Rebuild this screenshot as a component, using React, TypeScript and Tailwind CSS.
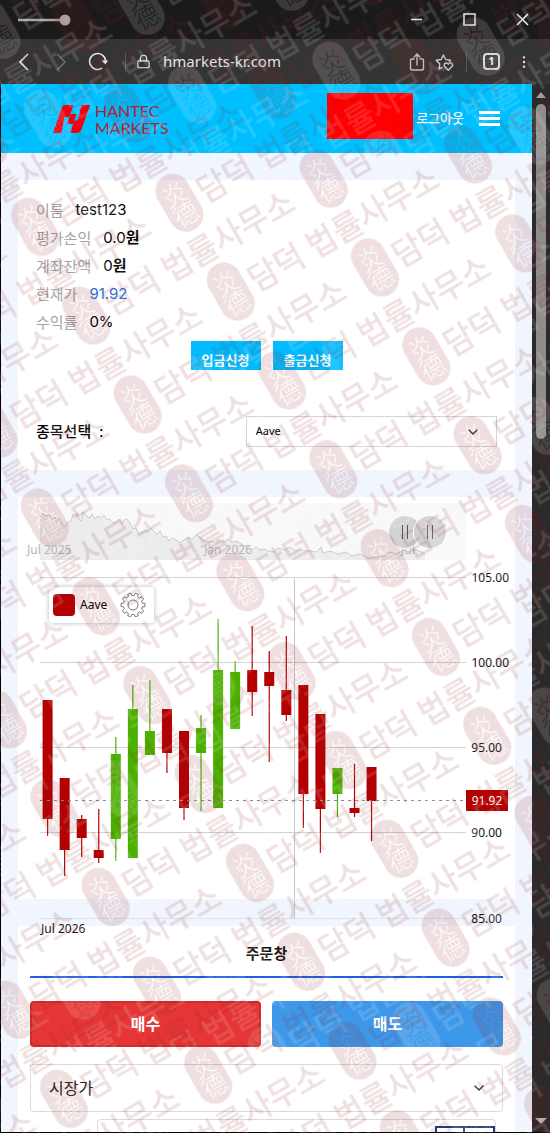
import { ChevronDown, Lock, MoreVertical } from "lucide-react";

type Candle = {
  high: number;
  top: number;
  bottom: number;
  low: number;
  up?: boolean;
};

// y values in chart space, one entry per day
const candles: Candle[] = [
  { high: 203, top: 203, bottom: 322, low: 339 },
  { high: 281, top: 281, bottom: 353, low: 379 },
  { high: 318, top: 322, bottom: 341, low: 360 },
  { high: 312, top: 353, bottom: 361, low: 366 },
  { high: 240, top: 257, bottom: 342, low: 364, up: true },
  { high: 188, top: 212, bottom: 361, low: 361, up: true },
  { high: 183, top: 234, bottom: 258, low: 258, up: true },
  { high: 212, top: 212, bottom: 256, low: 276 },
  { high: 234, top: 234, bottom: 311, low: 323 },
  { high: 218, top: 231, bottom: 256, low: 314, up: true },
  { high: 122, top: 173, bottom: 311, low: 311, up: true },
  { high: 164, top: 175, bottom: 232, low: 232, up: true },
  { high: 129, top: 173, bottom: 195, low: 219 },
  { high: 154, top: 175, bottom: 189, low: 265 },
  { high: 139, top: 193, bottom: 218, low: 224 },
  { high: 188, top: 188, bottom: 297, low: 331 },
  { high: 217, top: 217, bottom: 312, low: 356 },
  { high: 271, top: 271, bottom: 297, low: 320, up: true },
  { high: 267, top: 311, bottom: 316, low: 320 },
  { high: 270, top: 270, bottom: 304, low: 344 },
];

const gridLines = [
  { y: 81, label: "105.00" },
  { y: 166, label: "100.00" },
  { y: 251, label: "95.00" },
  { y: 336, label: "90.00" },
  { y: 422, label: "85.00" },
];

const account = [
  { label: "이름", value: "test123" },
  { label: "평가손익", value: "0.0", unit: "원" },
  { label: "계좌잔액", value: "0", unit: "원" },
  { label: "현재가", value: "91.92", accent: true },
  { label: "수익률", value: "0%" },
];

const historyLine =
  "22,20 25,16 28,19 31,17 34,22 37,20 39,24 41,21 44,27 46,30 48,28 51,24 53,25 55,17 57,20 59,16 61,22 63,24 65,15 68,18 71,21 74,17 77,22 80,19 83,21 86,18 89,23 92,22 95,26 98,25 101,22 104,27 106,23 109,22 112,26 115,32 118,31 121,37 124,35 127,33 130,35 133,31 136,34 139,38 142,34 145,40 148,39 151,44 155,41 158,43 162,46 166,43 170,40 174,42 178,38 182,40 186,44 190,45 194,44 198,46 202,43 206,45 210,42 214,45 218,44 222,46 226,49 230,48 234,53 238,50 242,53 246,52 250,54 255,55 260,51 266,53 272,50 278,54 285,53 292,54 299,55 303,50 305,56 312,54 320,57 328,55 334,59 342,57 350,61 358,60 366,59 372,55 378,57 386,53 391,55 396,52 401,54 407,57";

function BrowserBar() {
  return (
    <div className="shrink-0 text-gray-200">
      <div className="flex h-[39px] items-center justify-between bg-[#1b1a1a] pl-[18px] pr-[21px]">
        <svg width="54" height="12" viewBox="0 0 54 12">
          <path d="M0 6h46" stroke="#a9a4a4" strokeWidth="2.5" />
          <circle cx="47" cy="6" r="5.5" fill="#b5aeae" />
        </svg>
        <div className="flex items-center gap-[40px]">
          <button aria-label="Minimize">
            <svg width="13" height="13" viewBox="0 0 13 13" stroke="#e5e5e5" strokeWidth="1.500">
              <path d="M1 6.500h11" />
            </svg>
          </button>
          <button aria-label="Maximize">
            <svg width="13" height="13" viewBox="0 0 13 13" fill="none" stroke="#e5e5e5" strokeWidth="1.500">
              <rect x="1" y="1" width="11" height="11" />
            </svg>
          </button>
          <button aria-label="Close">
            <svg width="13" height="13" viewBox="0 0 13 13" stroke="#f0f0f0" strokeWidth="1.600">
              <path d="m1 1 11 11M12 1 1 12" />
            </svg>
          </button>
        </div>
      </div>
      <div className="flex h-[45px] items-center bg-[#353434] pl-4 pr-[18px]">
        <button aria-label="Back">
          <svg width="16" height="20" viewBox="0 0 16 20" fill="none">
            <path d="M12 2 4 10l8 8" stroke="#e5e5e5" strokeWidth="1.6" />
          </svg>
        </button>
        <button aria-label="Forward" className="ml-[21px]">
          <svg width="16" height="20" viewBox="0 0 16 20" fill="none">
            <path d="m4 2 8 8-8 8" stroke="#6d6a6a" strokeWidth="1.6" />
          </svg>
        </button>
        <button aria-label="Reload" className="ml-[18px]">
          <svg width="22" height="20" viewBox="0 0 22 20" fill="none">
            <path d="M15 16.2A8 8 0 1 1 18.6 9" stroke="#e5e5e5" strokeWidth="1.6" />
            <path d="M14.5 8.5h6.5l-2.5 4z" fill="#e5e5e5" />
          </svg>
        </button>
        <span className="ml-4 h-5 w-px bg-[#595656]" />
        <Lock size={15} strokeWidth={1.8} className="ml-[10px]" />
        <span className="ml-3 flex-1 text-[15px]">hmarkets-kr.com</span>
        <button aria-label="Share">
          <svg width="16" height="20" viewBox="0 0 16 20" fill="none" stroke="#cfcccc" strokeWidth="1.4">
            <path d="M5.5 7H2.7Q1.5 7 1.5 8.2v8Q1.5 18 3.3 18h9.4q1.8 0 1.8-1.8v-8Q14.500 7 13.300 7H10.500M8 13.500V2.500M4.700 5.500 8 2l3.300 3.500" />
          </svg>
        </button>
        <button aria-label="Favorites" className="ml-[10px]">
          <svg width="19" height="20" viewBox="0 0 19 20" fill="none" stroke="#cfcccc" strokeWidth="1.4" strokeLinejoin="round">
            <path d="M7.500 15.200 4 17l.8-5L1.200 8.300l4.900-.8L8.400 3l2.300 4.500 4.800.8-1.500 1.600" />
            <path d="M13.300 18.200 9.700 14.600a2.100 2.100 0 0 1 3-3l.6.600.6-.6a2.100 2.100 0 0 1 3 3z" />
          </svg>
        </button>
        <span className="ml-3 h-5 w-px bg-[#595656]" />
        <button
          aria-label="Tabs"
          className="ml-4 flex size-[17px] items-center justify-center rounded border-2 border-gray-300 text-[11px] font-bold"
        >
          1
        </button>
        <button aria-label="More" className="ml-4">
          <MoreVertical size={16} strokeWidth={1.6} />
        </button>
      </div>
    </div>
  );
}

function Logo() {
  return (
    <a href="#" className="flex items-center gap-1">
      <svg width="38" height="30" viewBox="0 0 38 30" fill="#f2000d">
        <path d="M11 1h9.500l-4.200 12h-4.800L8.500 29H0L7.800 6.500Q9 2 11 1z" />
        <path d="M28.500 1H37l-8 23q-1.500 5-6 5h-6l4.300-12.500h3.500z" />
        <path d="M17.500 10h6l-3.500 10h-6z" />
      </svg>
      <span className="flex flex-col font-['Lato',sans-serif] text-base leading-[17px] text-[#b32238]">
        <span>HANTEC</span>
        <span>MARKETS</span>
      </span>
    </a>
  );
}

function SiteHeader() {
  return (
    <header className="flex h-[69px] shrink-0 items-center justify-between bg-[#00bfff] pl-[52px] pr-8">
      <Logo />
      <div className="flex items-center">
        <div className="mb-[5px] h-[46px] w-[86px] bg-[#ff0000]" />
        <a href="#" className="ml-[3px] text-[13px] font-medium text-white">
          로그아웃
        </a>
        <button aria-label="Menu" className="ml-[15px] flex w-[21px] flex-col gap-[3px]">
          <span className="h-[3px] bg-white" />
          <span className="h-[3px] bg-white" />
          <span className="h-[3px] bg-white" />
        </button>
      </div>
    </header>
  );
}

function AccountCard() {
  return (
    <section className="bg-white px-[18px] pb-[23px] pt-4">
      <dl>
        {account.map((row) => (
          <div key={row.label} className="flex h-7 items-center gap-3 text-[15px]">
            <dt className="text-[#a3a3a3]">{row.label}</dt>
            <dd
              className={`font-['Inter','Noto_Sans_CJK_KR',sans-serif] ${
                row.accent ? "text-[#2b72d9]" : "text-black"
              }`}
            >
              {row.value}
              {row.unit && <b>{row.unit}</b>}
            </dd>
          </div>
        ))}
      </dl>
      <div className="mt-[5px] flex justify-center gap-3">
        <button className="h-[29px] w-[70px] bg-[#00bbff] pt-2 text-[13px] leading-5 font-bold text-white">입금신청</button>
        <button className="h-[29px] w-[70px] bg-[#00bbff] pt-2 text-[13px] leading-5 font-bold text-white">출금신청</button>
      </div>
      <div className="mt-[46px] flex items-center justify-between">
        <label htmlFor="symbol" className="flex gap-2 text-[15px] font-medium text-black">
          <span>종목선택</span>
          <span>:</span>
        </label>
        <div className="relative w-[54.5%]">
          <select
            id="symbol"
            className="h-[31px] w-full appearance-none border border-[#d4d4d4] bg-white px-[9px] text-[11px] text-black"
          >
            <option>Aave</option>
          </select>
          <ChevronDown size={16} className="pointer-events-none absolute right-4 top-2 text-[#333]" />
        </div>
      </div>
    </section>
  );
}

function Grip({ label }: { label: string }) {
  return (
    <button
      aria-label={label}
      className="-mr-[9px] flex size-[34px] items-center justify-center gap-1 rounded-full border border-white bg-[#cdcdcd]/85"
    >
      <span className="h-[14px] w-px bg-[#555]" />
      <span className="h-[14px] w-px bg-[#555]" />
    </button>
  );
}

function GearIcon() {
  const teeth = Array.from({ length: 10 }, (_, i) => {
    const at = (deg: number, r: number) => {
      const a = ((i * 36 + deg) * Math.PI) / 180;
      return `${(13 + r * Math.cos(a)).toFixed(2)} ${(13 + r * Math.sin(a)).toFixed(2)}`;
    };
    return `${i ? "L" : "M"}${at(-11, 9.5)}L${at(-8, 12)}L${at(8, 12)}L${at(11, 9.5)}`;
  });
  return (
    <svg width="26" height="26" viewBox="0 0 26 26" fill="none" stroke="#777" strokeLinejoin="round">
      <path d={`${teeth.join("")}Z`} />
      <circle cx="13" cy="13" r="5" />
    </svg>
  );
}

function ChartCard() {
  return (
    <section className="relative z-10 h-[402px] bg-white">
      <svg viewBox="0 0 497 440" className="w-full overflow-visible text-xs">
        {/* range scroller */}
        <rect x="22" y="6" width="426" height="57" fill="#f8f8f8" />
        <polygon points={`22,63 ${historyLine} 407,63`} fill="#ececec" />
        <polyline points={historyLine} fill="none" stroke="#c9c9c9" />
        <g fill="#b5b5b5">
          <text x="9" y="57">Jul 2025</text>
          <text x="186" y="57">Jan 2026</text>
          <text x="383" y="57">Jul</text>
        </g>

        {gridLines.map((line) => (
          <g key={line.label}>
            <path d={`M22 ${line.y - 0.5}H448`} stroke={line.y === 422 ? "#dbe2ea" : "#d2d0d0"} />
            <text x={line.label.length === 5 ? 484 : 491} y={line.y + 4} textAnchor="end" fill="#111">
              {line.label}
            </text>
          </g>
        ))}
        <path d="M276.500 81V422" stroke="#c6c6c6" />

        {candles.map((c, i) => {
          const x = 29.6 + i * 17.05;
          const color = c.up ? "#4bb000" : "#b40000";
          return (
            <g key={i} fill={color}>
              <path d={`M${x} ${c.high}V${c.low}`} stroke={color} strokeWidth="1.200" />
              <rect x={x - 5} y={c.top} width="10" height={c.bottom - c.top} />
            </g>
          );
        })}

        <path d="M22 303.500H448" stroke="#8a8a8a" strokeDasharray="3 4" />
        <rect x="448" y="293" width="42" height="21" fill="#b40000" />
        <text x="469" y="308" textAnchor="middle" fill="#fff">91.92</text>
        <text x="23" y="436" fill="#111">Jul 2026</text>
      </svg>

      <div className="absolute left-[74.5%] top-[18px] flex">
        <Grip label="Range start" />
        <Grip label="Range end" />
      </div>

      <div className="absolute left-[31px] top-[90px] flex h-[36px] items-center rounded bg-white/90 pl-1 pr-2 shadow-[0_0_5px_rgba(0,0,0,0.3)]">
        <span className="size-[22px] rounded bg-[#b40000]" />
        <span className="ml-[5px] text-xs text-black">Aave</span>
        <button aria-label="Series settings" className="ml-[13px]">
          <GearIcon />
        </button>
      </div>
    </section>
  );
}

function OrderCard() {
  return (
    <section className="bg-white px-3">
      <h2 className="border-b-2 border-[#1d5fe0] pb-[11px] pt-[15px] text-center text-[15px] leading-6 font-bold text-[#111]">
        주문창
      </h2>
      <div className="mt-[23px] grid grid-cols-2 gap-[11px]">
        <button className="h-[46px] rounded border-2 border-[#cf2b2b] bg-[#e53535] text-base font-bold text-white">
          매수
        </button>
        <button className="h-[46px] rounded bg-[#3d98ea] text-base font-bold text-white">매도</button>
      </div>
      <div className="relative mt-[17px]">
        <select
          aria-label="시장가"
          className="h-12 w-full appearance-none rounded border border-[#d9d9d9] bg-white px-[18px] text-base text-[#222]"
        >
          <option>시장가</option>
        </select>
        <ChevronDown size={16} className="pointer-events-none absolute right-4 top-4 text-[#333]" />
      </div>
      <div className="ml-[67px] mr-[7px] mt-[7px] flex h-12 items-start justify-end rounded border border-[#d9d9d9] pt-[6px]">
        <button aria-label="Decrease" className="h-9 w-[30px] border-2 border-[#22387f]" />
        <button aria-label="Increase" className="h-9 w-[30px] border-2 border-l-0 border-[#22387f]" />
      </div>
    </section>
  );
}

function Scrollbar() {
  return (
    <div className="flex w-[18px] shrink-0 flex-col items-center justify-between bg-[#2b2929] pb-2 pt-2">
      <svg width="10" height="6" viewBox="0 0 10 6" fill="#a29d9d">
        <path d="M5 0l5 6H0z" />
      </svg>
      <div className="mt-[6px] w-full flex-1 px-1">
        <div className="mx-auto h-[33%] w-[10px] rounded-full bg-[#8f8c8c]" />
      </div>
      <svg width="12" height="6" viewBox="0 0 12 6" fill="#c0baba">
        <path d="M0 0h12L6 6z" />
      </svg>
    </div>
  );
}

// Brick layout: each stamp repeats half a tile over on the next row
const stampOffsets = [
  [0, 0],
  [137, 51.3],
  [137, -51.3],
  [-137, 51.3],
];

function StampPattern({ id, x, y, color }: { id: string; x: number; y: number; color: string }) {
  return (
    <>
      <mask id={`${id}-seal`} maskUnits="userSpaceOnUse" x="-20" y="-34" width="40" height="68">
        <rect x="-17.500" y="-31" width="35" height="62" rx="17.500" fill="#fff" />
        <g fill="#000" fontSize="25" textAnchor="middle" className="font-['Noto_Sans_CJK_TC',sans-serif] font-light">
          <text y="-1">炎</text>
          <text y="22">德</text>
        </g>
      </mask>
      <pattern id={id} patternUnits="userSpaceOnUse" x={x} y={y} width="274" height="102.600" patternTransform="rotate(-30)">
        {stampOffsets.map(([dx, dy]) => (
          <g key={`${dx},${dy}`} transform={`translate(${18 + dx} ${32 + dy})`} fill={color}>
            <rect x="-17.500" y="-31" width="35" height="62" rx="17.500" mask={`url(#${id}-seal)`} />
            <text x="22" y="13" fontSize="32" stroke={color} strokeWidth="0.700">
              담덕 법률사무소
            </text>
          </g>
        ))}
      </pattern>
    </>
  );
}

function Watermark() {
  return (
    <svg className="pointer-events-none absolute inset-0 z-20 size-full" aria-hidden="true">
      <defs>
        <StampPattern id="stamp-dark" x={-101} y={182} color="#8c1c22" />
        <StampPattern id="stamp-light" x={101} y={146} color="#ffffff" />
      </defs>
      <rect width="100%" height="100%" fill="url(#stamp-light)" opacity="0.14" />
      <rect width="100%" height="100%" fill="url(#stamp-dark)" opacity="0.14" />
    </svg>
  );
}

export default function App() {
  return (
    <div className="relative flex h-screen flex-col overflow-hidden bg-[#1b1a1a] font-['Noto_Sans','Noto_Sans_CJK_KR',sans-serif]">
      <BrowserBar />
      <div className="flex min-h-0 flex-1 border-b border-l border-black">
        <main className="flex min-w-0 flex-1 flex-col overflow-hidden bg-[#f0f5fe]">
          <SiteHeader />
          <div className="flex flex-col gap-[27px] px-[17px] pt-[27px]">
            <AccountCard />
            <ChartCard />
            <OrderCard />
          </div>
        </main>
        <Scrollbar />
      </div>
      <Watermark />
    </div>
  );
}
